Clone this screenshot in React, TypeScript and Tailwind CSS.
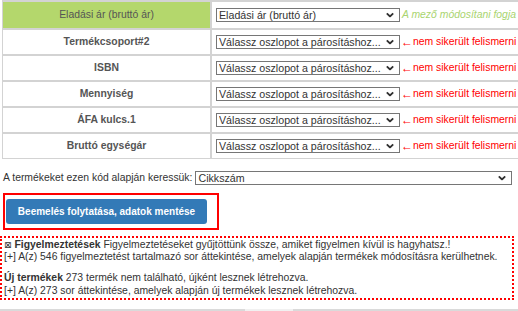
import React from "react";

const rows = [
  { label: "Termékcsoport#2" },
  { label: "ISBN" },
  { label: "Mennyiség" },
  { label: "ÁFA kulcs.1" },
  { label: "Bruttó egységár" },
];

function Chevron() {
  return (
    <svg width="8" height="5" viewBox="0 0 8 5" className="pointer-events-none absolute right-[6px] top-1/2 -translate-y-1/2">
      <polyline points="0.8,0.8 4,4 7.2,0.8" fill="none" stroke="#333" strokeWidth="1.8" />
    </svg>
  );
}

function ColumnSelect({ value }: { value: string }) {
  return (
    <div className="relative w-[184px] h-[14px] shrink-0">
      <select
        defaultValue={value}
        className="appearance-none w-full h-full border border-[#767676] bg-white pl-[2px] pr-[14px] py-0 text-[10.67px] leading-[12px] text-[#333] rounded-none outline-none"
      >
        <option>{value}</option>
      </select>
      <Chevron />
    </div>
  );
}

export default function App() {
  return (
    <div className="w-[518px] h-[311px] overflow-hidden bg-white flex flex-col font-['Liberation_Sans',Arial,sans-serif] text-[10.4px] text-[#333]">
      {/* Column mapping */}
      <div className="pl-[2px]">
        <table className="border-separate border-spacing-0 w-[760px]">
          <tbody>
            <tr>
              <td className="p-0 border border-t-2 border-[#d3d3d3] bg-[#b4d76c] w-[209px]">
                <div className="h-[26px] flex items-center justify-center text-[#555]">Eladási ár (bruttó ár)</div>
              </td>
              <td className="p-0 border border-t-2 border-[#d3d3d3]">
                <div className="h-[26px] flex items-center pl-[4px] whitespace-nowrap">
                  <ColumnSelect value="Eladási ár (bruttó ár)" />
                  <span className="ml-[2px] italic text-[#a9d46f]">A mező módosítani fogja</span>
                </div>
              </td>
            </tr>
            {rows.map((r) => (
              <tr key={r.label}>
                <td className="p-0 border border-[#d3d3d3] w-[209px]">
                  <div className="h-[24px] flex items-center justify-center font-bold text-[#555]">{r.label}</div>
                </td>
                <td className="p-0 border border-[#d3d3d3]">
                  <div className="h-[24px] flex items-center pl-[4px] whitespace-nowrap text-[#f00]">
                    <ColumnSelect value="Válassz oszlopot a párosításhoz..." />
                    <span className="ml-[1px] text-[12px]">←</span>
                    <span>nem sikerült felismerni</span>
                  </div>
                </td>
              </tr>
            ))}
          </tbody>
        </table>
      </div>

      {/* Search key */}
      <div className="flex items-center mt-[11px] pl-[3px] whitespace-nowrap">
        <span>A termékeket ezen kód alapján keressük:</span>
        <div className="relative ml-[3px] w-[317px] h-[14px] shrink-0">
          <select
            defaultValue="Cikkszám"
            className="appearance-none w-full h-full border border-[#767676] bg-white pl-[2px] py-0 text-[10.67px] leading-[12px] text-[#333] rounded-none outline-none"
          >
            <option>Cikkszám</option>
          </select>
          <Chevron />
        </div>
      </div>

      {/* Save */}
      <div className="flex pl-[3px] mt-[7px]">
        <div className="flex border-2 border-[#f00] pl-[1px] pt-[4px] pr-[10px] pb-[4px]">
          <button className="w-[201px] h-[25px] rounded-[3px] bg-[#337ab7] text-white font-bold text-[10px]">
            Beemelés folytatása, adatok mentése
          </button>
        </div>
      </div>

      {/* Warnings */}
      <div className="mt-[6px] w-[514px] border-2 border-dotted border-[#f00] pl-[2px] pt-[1px] leading-[12.8px] whitespace-nowrap">
        <div>
          <div>
            <span className="font-['DejaVu_Sans',sans-serif] text-[9px]">⊠</span> <b>Figyelmeztetések</b> Figyelmeztetéseket gyűjtöttünk össze, amiket figyelmen kívül is hagyhatsz.!
          </div>
          <div>[+] A(z) 546 figyelmeztetést tartalmazó sor áttekintése, amelyek alapján termékek módosításra kerülhetnek.</div>
        </div>
        <div className="mt-[8px]">
          <div>
            <b>Új termékek</b> 273 termék nem található, újként lesznek létrehozva.
          </div>
          <div>[+] A(z) 273 sor áttekintése, amelyek alapján új termékek lesznek létrehozva.</div>
        </div>
      </div>

      {/* page scrollbar edge */}
      <div className="mt-auto h-[2px] flex">
        <div className="w-[245px] bg-[#dadada]" />
        <div className="w-[48px] bg-[#f1f1f1]" />
        <div className="flex-1 bg-[#dadada]" />
      </div>
    </div>
  );
}
